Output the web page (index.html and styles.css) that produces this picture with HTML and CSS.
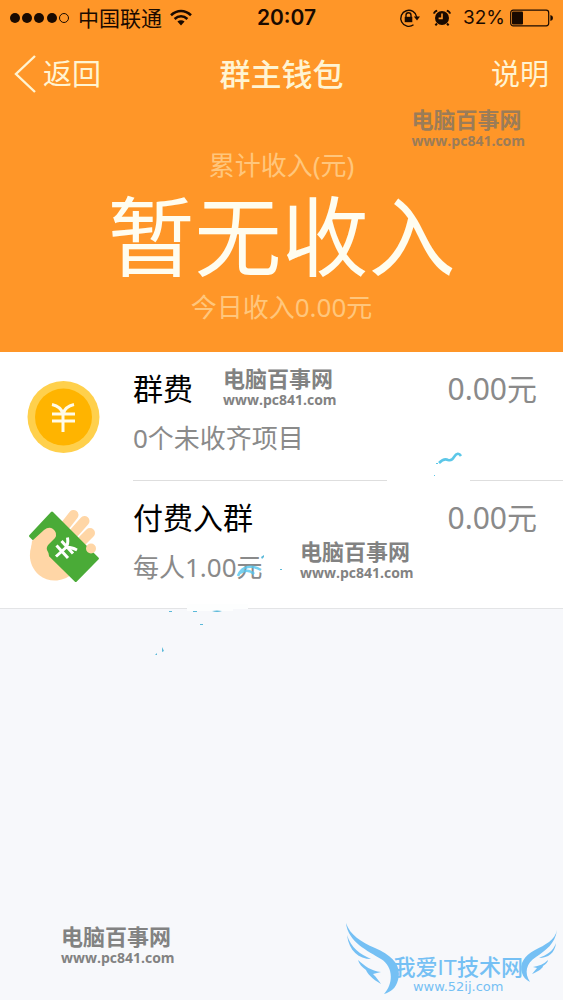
FILE: index.html
```html
<!DOCTYPE html>
<html lang="zh-CN">
<head>
<meta charset="utf-8">
<meta name="viewport" content="width=device-width, initial-scale=1">
<title>群主钱包</title>
<link rel="stylesheet" href="styles.css">
</head>
<body>
<div class="screen">
  <header class="hero">
    <div class="status">
      <div class="status-left">
        <svg class="signal" width="60" height="12" viewBox="0 0 60 12" aria-hidden="true">
          <circle cx="5" cy="6" r="5"/><circle cx="17" cy="6" r="5"/><circle cx="29" cy="6" r="5"/><circle cx="42" cy="6" r="5"/>
          <circle cx="54" cy="6" r="4.5" fill="none" stroke="#1a0a00"/>
        </svg>
        <span class="carrier">中国联通</span>
        <svg width="22" height="18" viewBox="0 0 22 18" fill="none" stroke="#1a0a00" stroke-width="2.6" aria-hidden="true">
          <path d="M1 6.2C7 .6 15 .6 21 6.2M4.6 10C8.5 6.5 13.5 6.5 17.4 10"/>
          <path d="M7.4 12.6C9.6 10.8 12.4 10.8 14.6 12.6L11 16.4Z" fill="#1a0a00" stroke="none"/>
        </svg>
      </div>
      <span class="clock">20:07</span>
      <div class="status-right">
        <svg width="22" height="20" viewBox="0 0 22 20" fill="none" stroke="#1a0a00" stroke-width="1.4" aria-hidden="true">
          <path d="M14.5 16.8A8 8 0 1 1 17.7 9"/>
          <path d="M14.8 8.6H21L18 12.6Z" fill="#1a0a00" stroke="none"/>
          <path d="M5.7 8.8H13.3V14.2H5.7Z" fill="#1a0a00" stroke="none"/>
          <path d="M7 9V7.3A2.5 2.5 0 0 1 12 7.3V9"/>
        </svg>
        <svg width="20" height="18" viewBox="0 0 20 18" fill="none" stroke="#1a0a00" aria-hidden="true">
          <circle cx="10" cy="9" r="7" fill="#1a0a00" stroke="none"/>
          <path d="M2 4.6Q2.4 2.4 5.2 1.6M18 4.6Q17.6 2.4 14.8 1.6M5 14.5L3.4 16.4M15 14.5L16.6 16.4" stroke-width="2"/>
          <path d="M10 4.4V9.4H6.6" stroke="#ff9628" stroke-width="1.6"/>
        </svg>
        <div class="battery">
          <span class="percent">32%</span>
          <svg width="43" height="18" viewBox="0 0 43 18" aria-hidden="true">
            <rect x=".7" y="1.2" width="38" height="15.6" rx="2.5" fill="none" stroke="#1a0a00" stroke-width="1.2"/>
            <rect x="2" y="2.6" width="11" height="12.8" rx="1"/>
            <path d="M40.4 6Q43 6.4 43 9T40.4 12Z"/>
          </svg>
        </div>
      </div>
    </div>
    <nav class="nav">
      <button class="nav-button back" type="button">
        <svg width="22" height="38" viewBox="0 0 22 38" fill="none" stroke="#fff4d2" stroke-width="2.4" aria-hidden="true"><path d="M21 1L2 19L21 37"/></svg>
        <span>返回</span>
      </button>
      <h1 class="title">群主钱包</h1>
      <button class="nav-button help" type="button">说明</button>
    </nav>
    <section class="summary">
      <p class="caption">累计收入(元)</p>
      <p class="amount">暂无收入</p>
      <p class="caption">今日收入0.00元</p>
    </section>
    <div class="mark mark-hero"><strong>电脑百事网</strong><span>www.pc841.com</span></div>
  </header>

  <main class="list">
    <section class="row">
      <svg class="icon" width="74" height="74" viewBox="0 0 74 74" aria-hidden="true">
        <circle cx="36.5" cy="37" r="36" fill="#ffd04c"/>
        <circle cx="36.5" cy="37" r="28.5" fill="#ffb400"/>
        <path d="M25 24.5Q34 26.5 36 34Q38 26.5 47 24.5M25 34H48M25 41H48M36 33V52" fill="none" stroke="#fffbe8" stroke-width="3"/>
      </svg>
      <div class="row-body">
        <div class="row-text"><h2>群费</h2><p>0个未收齐项目</p></div>
        <span class="value">0.00元</span>
      </div>
      <div class="mark mark-fee"><strong>电脑百事网</strong><span>www.pc841.com</span></div>
      <svg class="sketch sketch-upper" width="83" height="50" viewBox="0 0 83 50" aria-hidden="true">
        <path d="M0 26H83V34H0Z" fill="#fff"/>
        <path d="M52 12Q57 7 61 9Q65 10 67 6Q71 0 74 5" fill="none" stroke="#5cc7e8" stroke-width="2.6"/>
        <path d="M49 12H51V13H49ZM47 24H48V25H47Z" fill="#5cc7e8"/>
      </svg>
    </section>
    <section class="row">
      <svg class="icon" width="74" height="74" viewBox="0 0 74 74" aria-hidden="true">
        <g fill="none" stroke="#ffd6a6" stroke-width="10" stroke-linecap="round">
          <path d="M30 28L46.5 7M39 34L57.5 13M47 41L63 25"/>
        </g>
        <path d="M9 29C0 42 1 57 12 67C22 75 36 74 45 66L48 40L30 22Z" fill="#ffd6a6"/>
        <path d="M24 4Q25 3 26 4L71.4 49.5Q72.5 50.5 71.4 51.5L49.8 73.5Q48.8 74.5 47.7 73.5L2.5 29Q1.5 28 2.5 27Z" fill="#4aab37"/>
        <path d="M5 33L17 22Q22 18 26 21Q31 25 28 30L22 36Q19 39 20 42Q22 45 22 48L17 61L3 50Z" fill="#ffd6a6"/>
        <circle cx="64" cy="40.5" r="5" fill="#ffd6a6"/>
        <path d="M40.5 29.5Q41.5 36 39 39.5Q43 38.5 50 42M39 39.5L29 48.5M34.5 33L46 45.5M29.5 37.5L41 50" fill="none" stroke="#fff" stroke-width="3"/>
      </svg>
      <div class="row-body">
        <div class="row-text"><h2>付费入群</h2><p>每人1.00元</p></div>
        <span class="value">0.00元</span>
      </div>
      <div class="mark mark-join"><strong>电脑百事网</strong><span>www.pc841.com</span></div>
      <svg class="sketch sketch-lower" width="135" height="106" viewBox="0 0 135 106" aria-hidden="true">
        <path d="M37 55H98V60H83V62H37Z" fill="#fdfefe"/>
        <path d="M88 27Q91 19 98 18T111 21M90 24Q98 19 104 25" fill="none" stroke="#55c5ee" stroke-width="2.6" opacity=".8"/>
        <path d="M111 8L114 6V8L112 10ZM130 20H132V21H130ZM19 62H22V63H19ZM43 62H47V63H43ZM62 62Q67 61 72 62Q67 64 62 62ZM50 75H53V76H50ZM12 98L14 102L12 103ZM5 106L7 104V106Z" fill="#5bb9d9"/>
      </svg>
    </section>
  </main>

  <footer class="footer">
    <div class="mark"><strong>电脑百事网</strong><span>www.pc841.com</span></div>
    <div class="brand">
      <svg class="wing" width="54" height="72" viewBox="0 0 54 72" fill="#75c0f4" aria-hidden="true">
        <path d="M1 0C5 12 16 19 30 25C48 33 57 43 53 57C51 65 46 69 39 71C49 60 48 43 36 36C23 28 3 19 1 0Z"/>
        <path d="M2 12C6 25 15 31 26 36C14 36 4 28 2 12Z"/>
        <path d="M13 37C20 43 26 48 36 49L28 51C32 55 34 58 36 61C27 56 22 50 21 47C17 44 14 41 13 37Z"/>
      </svg>
      <div class="brand-text"><strong>我爱IT技术网</strong><span>www.52ij.com</span></div>
      <svg class="wing wing-small" width="38" height="52" viewBox="0 0 38 52" fill="#75c0f4" aria-hidden="true">
        <path d="M38 0C36 10 26 15 16 20C5 26 0 34 3 43C4 47 7 50 11 52C5 43 7 33 17 27C27 20 36 14 38 0Z"/>
        <path d="M37 13C34 22 27 25 20 28C29 28 36 23 37 13Z"/>
        <path d="M29 30C25 34 20 36 14 37L18 38L13 44C20 41 24 38 24 36C27 34 29 32 29 30Z"/>
      </svg>
    </div>
  </footer>
</div>
</body>
</html>
```
FILE: styles.css
```css
* { box-sizing: border-box; }

body {
  margin: 0;
  background: #f7f8fb;
  color: #000;
  font-family: "Noto Sans", "Noto Sans CJK SC", sans-serif;
}

h1, h2, p { margin: 0; font-weight: 400; }
svg { display: block; flex: none; }

.screen {
  display: flex;
  flex-direction: column;
  min-height: 100vh;
}

.hero {
  position: relative;
  padding-bottom: 26px;
  background: #ff9628;
}

.status {
  display: grid;
  grid-template-columns: 1fr auto 1fr;
  align-items: center;
  height: 36px;
  padding: 0 10px;
  color: #1a0a00;
  fill: #1a0a00;
}

.status-left, .status-right { display: flex; align-items: center; gap: 8px; }
.status-right { justify-content: flex-end; gap: 11px; }
.battery { display: flex; align-items: center; gap: 5px; }
.carrier { font-size: 21px; line-height: 28px; }
.clock { padding-left: 10px; font-family: Inter, sans-serif; font-size: 21px; font-weight: 600; line-height: 28px; }
.percent { font-family: Inter, sans-serif; font-size: 19px; line-height: 28px; }

.nav {
  display: grid;
  grid-template-columns: 1fr auto 1fr;
  align-items: center;
  height: 76px;
  padding: 0 14px;
  color: #fff4d2;
}

.nav-button {
  padding: 0;
  border: 0;
  background: none;
  color: inherit;
  font: inherit;
  font-size: 29px;
  line-height: 40px;
}

.back { display: flex; align-items: center; gap: 7px; justify-self: start; }
.help { justify-self: end; }
.title { font-size: 31px; font-weight: 500; line-height: 40px; }

.summary { padding-top: 34px; text-align: center; }
.caption { color: #ffc67c; font-size: 26px; line-height: 38px; }
.amount { padding-top: 8px; color: #fffdf0; font-family: "Liberation Sans", "Noto Sans CJK SC", sans-serif; font-size: 87px; line-height: 96px; }

.mark {
  display: flex;
  flex-direction: column;
  width: max-content;
  color: #828282;
  font-weight: 700;
}

.mark strong { font-family: "Liberation Sans", "Noto Sans CJK SC", sans-serif; font-size: 22px; font-weight: 600; line-height: 24px; }
.mark span { font-family: "Open Sans", sans-serif; font-size: 14px; line-height: 16px; }
.mark-hero { position: absolute; top: 109px; right: 38px; color: #9b7c58; }
.mark-fee { position: absolute; top: 16px; left: 223px; }
.mark-join { position: absolute; top: 60px; left: 300px; }

.list { background: #fff; border-bottom: 1px solid #e3e4e6; }

.row {
  position: relative;
  display: flex;
  align-items: center;
  gap: 32px;
  padding-left: 27px;
}

.row-body {
  display: flex;
  flex: 1;
  justify-content: space-between;
  padding: 14px 26px 15px 0;
}

.row:first-child .row-body { padding-bottom: 16px; border-bottom: 1px solid #dedede; }
.row h2 { font-size: 30px; line-height: 46px; }
.row p { color: #8a8a8a; font-size: 26px; line-height: 52px; }
.value { color: #8a8a8a; font-size: 30px; line-height: 46px; }

.sketch { position: absolute; }
.sketch-upper { top: 99px; left: 387px; }
.sketch-lower { top: 68px; left: 150px; }

.footer {
  display: flex;
  flex: 1;
  align-items: flex-end;
  justify-content: space-between;
  padding: 0 6px 0 61px;
}

.footer .mark { padding-bottom: 34px; }

.brand { display: flex; align-items: flex-end; padding-bottom: 4px; color: #75c0f4; }
.wing { margin-bottom: 1px; margin-right: -6px; }
.wing-small { margin: 0 0 14px -4px; }
.brand-text { display: flex; flex-direction: column; align-items: center; padding-bottom: 1px; }
.brand-text strong { font-family: "Liberation Sans", "Noto Sans CJK SC", sans-serif; font-size: 22px; font-weight: 500; line-height: 22px; }
.brand-text span { font-family: "DejaVu Sans", sans-serif; font-size: 13px; line-height: 16px; }
```
